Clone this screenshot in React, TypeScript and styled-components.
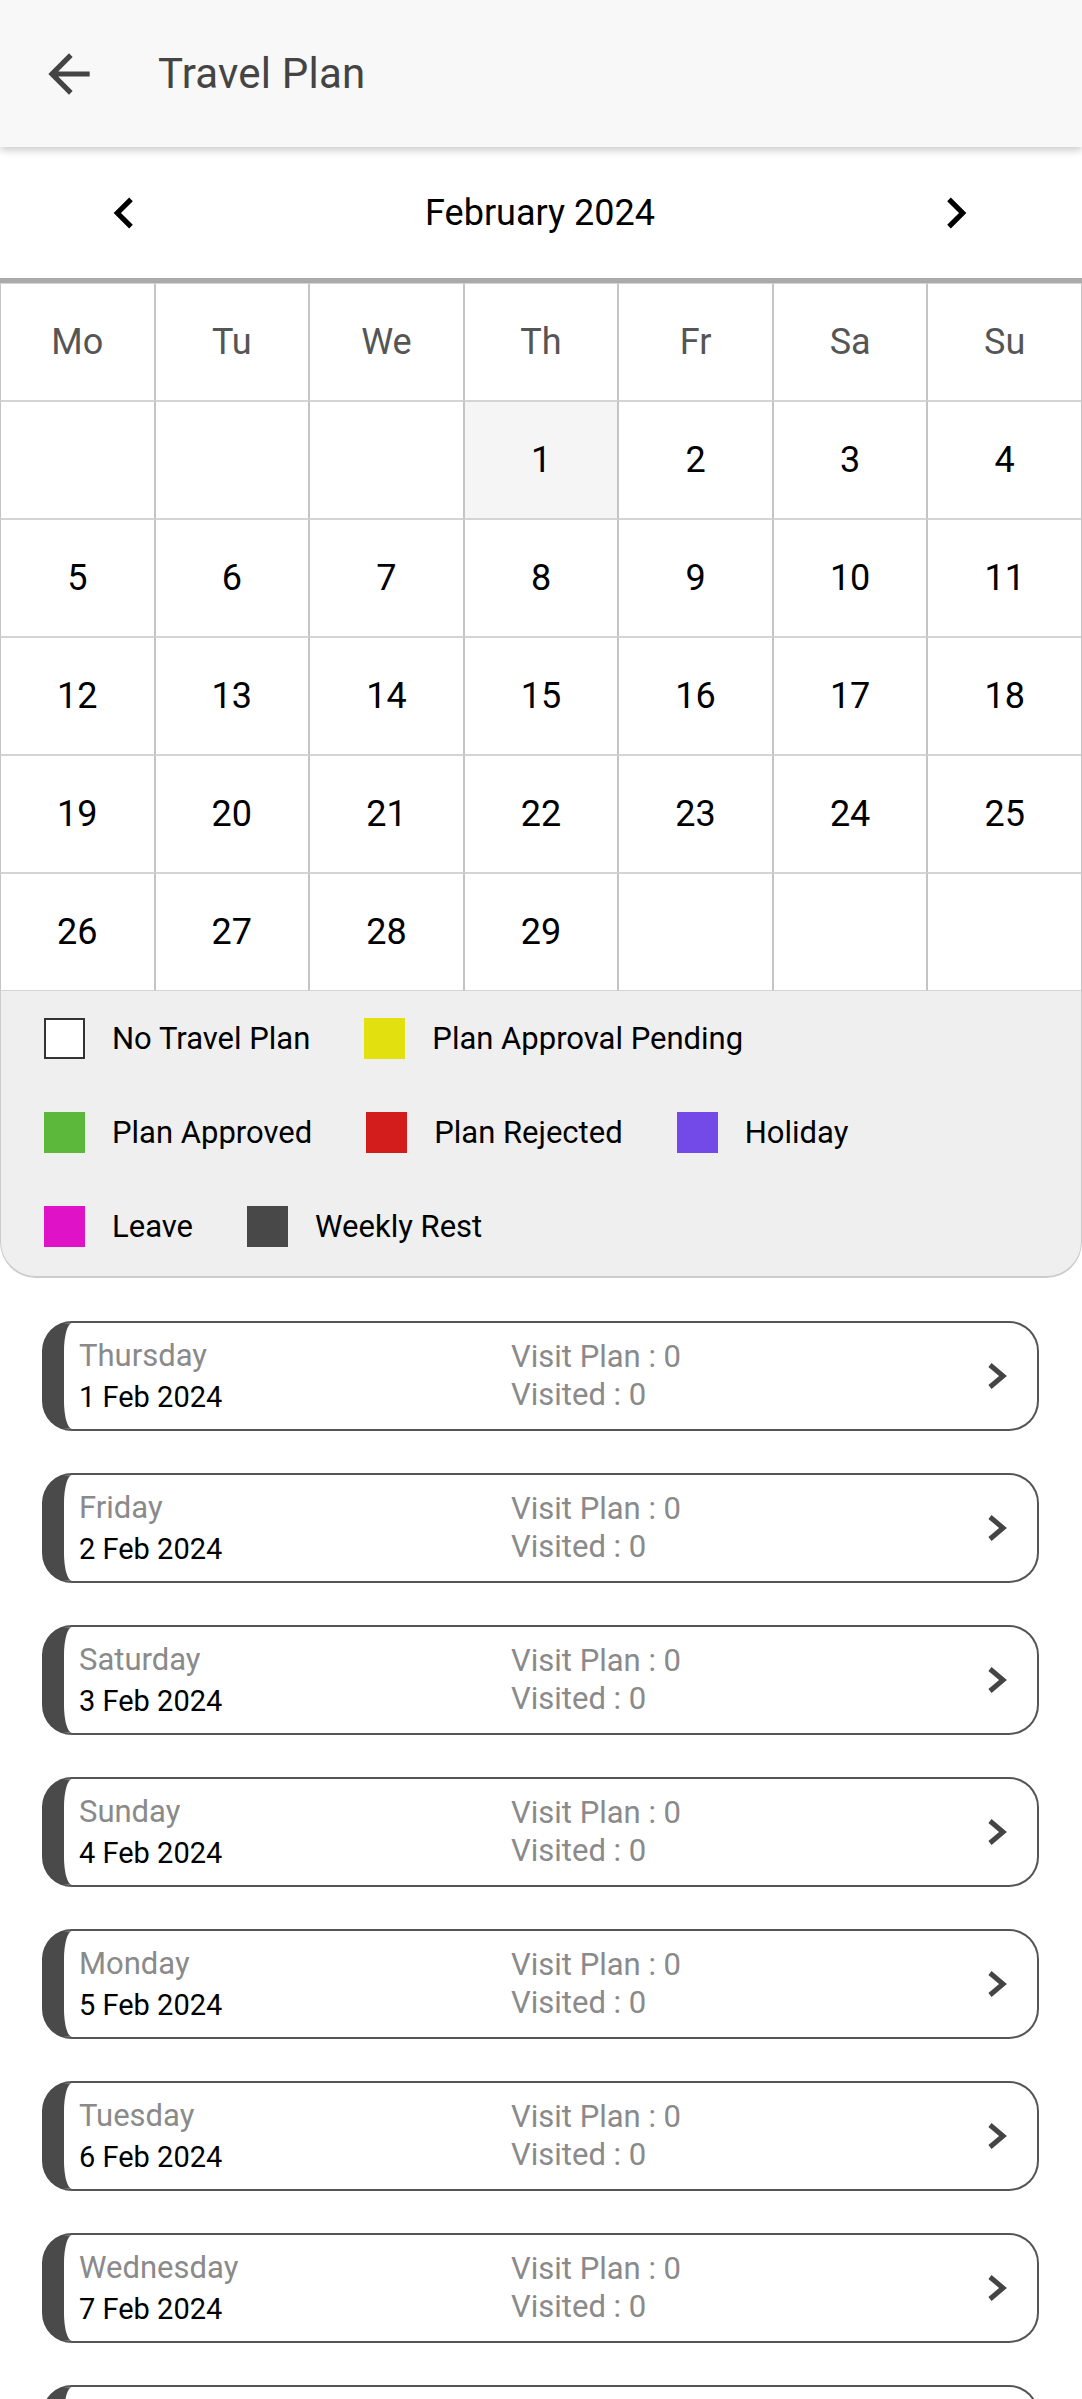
import React from "react";
import styled, { createGlobalStyle } from "styled-components";

// ------------------------------------------------
// Style
// ------------------------------------------------

const GlobalStyle = createGlobalStyle`
  html, body {
    margin: 0;
    padding: 0;
    background: #ffffff;
    font-family: Roboto, "Noto Sans", "Liberation Sans", sans-serif;
  }
  * {
    box-sizing: border-box;
  }
`;

const Page = styled.div`
  width: 100%;
  background: #ffffff;
`;

const Header = styled.header`
  position: relative;
  z-index: 2;
  height: 147px;
  display: flex;
  align-items: center;
  padding-left: 38px;
  background: #f8f8f8;
  box-shadow: 0 3px 8px rgba(0, 0, 0, 0.22);
`;

const IconButton = styled.button<{ $color?: string }>`
  display: flex;
  align-items: center;
  justify-content: center;
  width: 62px;
  height: 62px;
  padding: 0;
  border: none;
  background: transparent;
  color: ${(p) => p.$color || "#000"};
`;

const Title = styled.h1`
  margin: 0 0 0 58px;
  font-size: 42px;
  font-weight: 400;
  color: #444444;
  letter-spacing: 0.2px;
`;

const MonthBar = styled.div`
  height: 131px;
  display: flex;
  align-items: center;
  justify-content: space-between;
  padding: 0 95px 0 93px;
`;

const MonthLabel = styled.div`
  font-size: 36px;
  color: #000;
`;

const Grid = styled.div`
  display: grid;
  grid-template-columns: repeat(7, 1fr);
  border-top: 5px solid #aaaaaa;
`;

const Cell = styled.div<{ $head?: boolean; $today?: boolean }>`
  height: 118px;
  display: flex;
  align-items: center;
  justify-content: center;
  border-style: solid;
  border-width: 1px;
  border-color: #d4d4d4 #c4c4c4;
  background: ${(p) => (p.$today ? "#f5f5f5" : "#ffffff")};
  color: ${(p) => (p.$head ? "#555555" : "#000000")};
  font-size: 36px;
`;

const Legend = styled.div`
  display: flex;
  flex-wrap: wrap;
  column-gap: 54px;
  row-gap: 53px;
  padding: 27px 44px 29px 43px;
  background: #efefef;
  border: 1px solid #cccccc;
  border-top: none;
  border-bottom-width: 2px;
  border-radius: 0 0 36px 36px;
`;

const LegendItem = styled.div`
  display: flex;
  align-items: center;
  gap: 27px;
  font-size: 31px;
  color: #000;
`;

const Swatch = styled.span<{ $color: string; $outline?: boolean }>`
  width: 41px;
  height: 41px;
  flex: none;
  background: ${(p) => p.$color};
  border: ${(p) => (p.$outline ? "2px solid #333333" : "none")};
`;

const DayList = styled.div`
  display: flex;
  flex-direction: column;
  gap: 42px;
  padding: 43px 43px 40px 42px;
`;

const DayCard = styled.div`
  height: 110px;
  display: grid;
  grid-template-columns: 432px 1fr auto;
  align-items: center;
  padding: 0 30px 0 15px;
  border: 2px solid #555555;
  border-left: 22px solid #4a4a4a;
  border-radius: 30px;
  background: #ffffff;
`;

const Stack = styled.div`
  display: flex;
  flex-direction: column;
`;

const DayName = styled.div`
  font-size: 31px;
  line-height: 38px;
  color: #8a8a8a;
`;

const DayDate = styled.div`
  margin-top: 3px;
  font-size: 29px;
  line-height: 38px;
  color: #000;
`;

const Stat = styled.div`
  font-size: 31px;
  line-height: 38px;
  color: #8a8a8a;
`;

// ------------------------------------------------
// Icons
// ------------------------------------------------

const ArrowBack = () => (
  <svg width="62" height="62" viewBox="0 0 24 24" fill="currentColor">
    <path d="M20 11H7.83l5.59-5.59L12 4l-8 8 8 8 1.41-1.41L7.83 13H20v-2z" />
  </svg>
);

const ChevronLeft = () => (
  <svg width="62" height="62" viewBox="0 0 24 24" fill="currentColor">
    <path d="M15.41 7.41L14 6l-6 6 6 6 1.41-1.41L10.83 12z" />
  </svg>
);

const ChevronRight = () => (
  <svg width="62" height="62" viewBox="0 0 24 24" fill="currentColor">
    <path d="M10 6L8.59 7.41 13.17 12l-4.58 4.59L10 18l6-6z" />
  </svg>
);

const CardChevron = () => (
  <svg width="20" height="28" viewBox="0 0 20 28">
    <polyline
      points="3,3 16,14 3,25"
      fill="none"
      stroke="#444444"
      strokeWidth="5"
    />
  </svg>
);

// ------------------------------------------------
// Data
// ------------------------------------------------

const WEEK = ["Mo", "Tu", "We", "Th", "Fr", "Sa", "Su"];
const DAY_NAMES = [
  "Sunday",
  "Monday",
  "Tuesday",
  "Wednesday",
  "Thursday",
  "Friday",
  "Saturday",
];

const LEGEND = [
  { label: "No Travel Plan", color: "#ffffff", outline: true },
  { label: "Plan Approval Pending", color: "#e2e10f" },
  { label: "Plan Approved", color: "#5cb83a" },
  { label: "Plan Rejected", color: "#d31c1c" },
  { label: "Holiday", color: "#7349e8" },
  { label: "Leave", color: "#e012c7" },
  { label: "Weekly Rest", color: "#484848" },
];

const DAYS = Array.from({ length: 29 }, (_, i) => {
  const d = new Date(2024, 1, i + 1);
  return { day: i + 1, name: DAY_NAMES[d.getDay()] };
});

// Feb 1 2024 is a Thursday: 3 blank cells before, 3 after
const CELLS: (number | null)[] = [
  null,
  null,
  null,
  ...DAYS.map((d) => d.day),
  null,
  null,
  null,
];

// ------------------------------------------------
// View
// ------------------------------------------------

const App = () => {
  return (
    <Page>
      <GlobalStyle />
      <Header>
        <IconButton $color="#444444">
          <ArrowBack />
        </IconButton>
        <Title>Travel Plan</Title>
      </Header>

      <MonthBar>
        <IconButton>
          <ChevronLeft />
        </IconButton>
        <MonthLabel>February 2024</MonthLabel>
        <IconButton>
          <ChevronRight />
        </IconButton>
      </MonthBar>

      <Grid>
        {WEEK.map((w) => (
          <Cell key={w} $head>
            {w}
          </Cell>
        ))}
        {CELLS.map((c, i) => (
          <Cell key={i} $today={c === 1}>
            {c ?? ""}
          </Cell>
        ))}
      </Grid>

      <Legend>
        {LEGEND.map((l) => (
          <LegendItem key={l.label}>
            <Swatch $color={l.color} $outline={l.outline} />
            {l.label}
          </LegendItem>
        ))}
      </Legend>

      <DayList>
        {DAYS.map((d) => (
          <DayCard key={d.day}>
            <Stack>
              <DayName>{d.name}</DayName>
              <DayDate>{d.day} Feb 2024</DayDate>
            </Stack>
            <Stack>
              <Stat>Visit Plan : 0</Stat>
              <Stat>Visited : 0</Stat>
            </Stack>
            <CardChevron />
          </DayCard>
        ))}
      </DayList>
    </Page>
  );
};

export default App;
